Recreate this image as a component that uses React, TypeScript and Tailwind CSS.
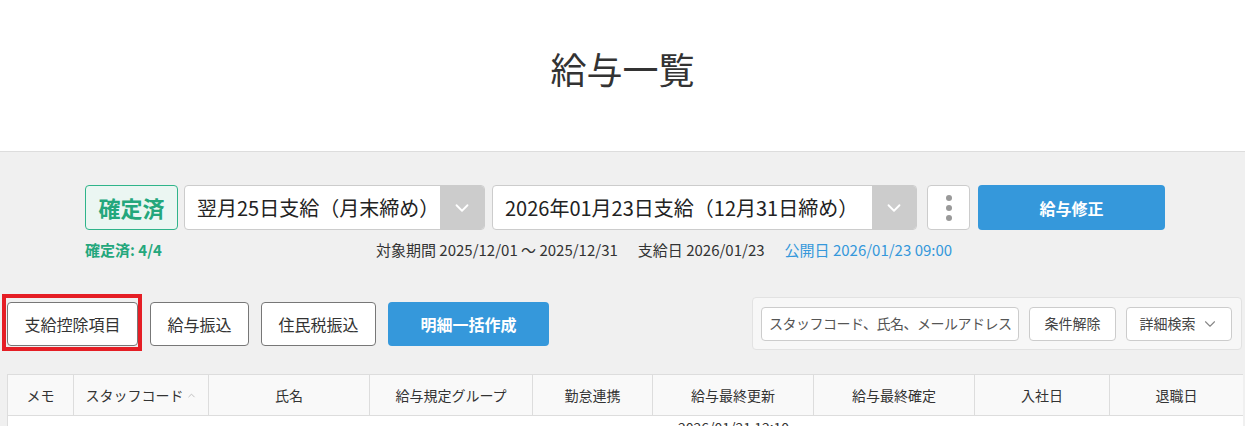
import React from 'react';
import { ChevronDown, ChevronUp } from 'lucide-react';

const font = { fontFamily: '"Noto Sans CJK JP", "Noto Sans", sans-serif' };

const columns = [
  { label: 'メモ', w: 'w-[66px]' },
  { label: 'スタッフコード', w: 'w-[135px]', sort: true },
  { label: '氏名', w: 'w-[161px]' },
  { label: '給与規定グループ', w: 'w-[163px]' },
  { label: '勤怠連携', w: 'w-[120px]' },
  { label: '給与最終更新', w: 'w-[161px]' },
  { label: '給与最終確定', w: 'w-[161px]' },
  { label: '入社日', w: 'w-[135px]' },
  { label: '退職日', w: 'flex-1' },
];

function SelectBox({ label, width }: { label: string; width: string }) {
  return (
    <div className={`flex h-[45px] ${width} rounded border border-[#cccccc] bg-white overflow-hidden`}>
      <div className="flex-1 flex items-center pl-3 text-[20px] text-[#222] whitespace-nowrap">{label}</div>
      <div className="w-[44px] shrink-0 bg-[#cccccc] flex items-center justify-center">
        <ChevronDown size={22} strokeWidth={2} className="text-white" />
      </div>
    </div>
  );
}

function OutlineButton({ label, width }: { label: string; width: string }) {
  return (
    <button className={`h-[44px] ${width} rounded border border-[#777] bg-white text-[16px] text-[#333]`}>
      {label}
    </button>
  );
}

export default function App() {
  return (
    <div className="w-[1245px] h-[426px] overflow-hidden bg-[#f0f0f0]" style={font}>
      <div className="h-[152px] bg-white border-b border-[#dddddd] flex items-center justify-center pb-[16px]">
        <h1 className="text-[36px] text-[#333] leading-none">給与一覧</h1>
      </div>

      <div className="pt-[33px] pl-[85px]">
        <div className="flex items-center">
          <div className="h-[45px] w-[93px] rounded border border-[#2fb48a] bg-[#ebf6f2] flex items-center justify-center text-[22px] font-bold text-[#24a77c]">
            確定済
          </div>
          <div className="ml-[6px]"><SelectBox label="翌月25日支給（月末締め）" width="w-[301px]" /></div>
          <div className="ml-[7px]"><SelectBox label="2026年01月23日支給（12月31日締め）" width="w-[425px]" /></div>
          <div className="ml-[10px] h-[45px] w-[43px] rounded border border-[#cccccc] bg-white flex flex-col items-center justify-center gap-[4px]">
            <span className="w-[6px] h-[6px] rounded-full bg-[#999]" />
            <span className="w-[6px] h-[6px] rounded-full bg-[#999]" />
            <span className="w-[6px] h-[6px] rounded-full bg-[#999]" />
          </div>
          <button className="ml-[8px] h-[45px] w-[187px] rounded bg-[#3598db] text-white text-[16px] font-bold">給与修正</button>
        </div>

        <div className="flex items-center mt-[10px] h-[20px] text-[15px] leading-[20px] whitespace-nowrap">
          <div className="w-[291px] font-bold text-[#24a77c]">確定済: 4/4</div>
          <div className="flex gap-[20px] text-[#333]">
            <span>対象期間 2025/12/01 〜 2025/12/31</span>
            <span>支給日 2026/01/23</span>
            <span className="text-[#3598db]">公開日 2026/01/23 09:00</span>
          </div>
        </div>
      </div>

      <div className="mt-[37px] pl-[7px] pr-[3px] flex items-center justify-between">
        <div className="flex items-center gap-[12px]">
          <div className="relative">
            <OutlineButton label="支給控除項目" width="w-[131px]" />
            <div className="absolute -left-[5px] -right-[4px] -top-[8px] -bottom-[5px] border-4 border-[#e51e25] pointer-events-none" />
          </div>
          <OutlineButton label="給与振込" width="w-[99px]" />
          <OutlineButton label="住民税振込" width="w-[115px]" />
          <button className="h-[44px] w-[161px] rounded bg-[#3598db] text-white text-[16px] font-bold">明細一括作成</button>
        </div>

        <div className="h-[53px] w-[490px] rounded border border-[#e2e2e2] bg-[#f7f7f7] flex items-center pl-[8px] gap-[10px]">
          <div className="h-[34px] w-[258px] shrink-0 rounded border border-[#cccccc] bg-white flex items-center pl-[7px] text-[14px] tracking-[-0.5px] text-[#555] whitespace-nowrap overflow-hidden">
            スタッフコード、氏名、メールアドレス
          </div>
          <button className="h-[34px] w-[87px] shrink-0 rounded border border-[#cccccc] bg-white text-[14px] text-[#444]">条件解除</button>
          <button className="h-[34px] w-[106px] shrink-0 rounded border border-[#cccccc] bg-white text-[14px] text-[#444] flex items-center justify-center gap-[5px]">
            詳細検索
            <ChevronDown size={18} strokeWidth={1.5} className="text-[#888]" />
          </button>
        </div>
      </div>

      <div className="mt-[24px] ml-[7px] mr-[2px] border-l border-[#dddddd] bg-white">
        <div className="flex h-[42px] bg-[#f9f9f9] border-y border-[#dddddd]">
          {columns.map((c, i) => (
            <div
              key={c.label}
              className={`${c.w} shrink-0 flex items-center justify-center text-[14px] text-[#333] ${i < columns.length - 1 ? 'border-r border-[#dddddd]' : ''}`}
            >
              {c.label}
              {c.sort && <ChevronUp size={11} strokeWidth={2} className="ml-[2px] text-[#bbb]" />}
            </div>
          ))}
        </div>
        <div className="flex h-[20px]">
          <div className="w-[645px] shrink-0" />
          <div className="w-[161px] shrink-0 text-center text-[14px] text-[#333] leading-[20px] pt-[1px]">2026/01/21 12:10</div>
        </div>
      </div>
    </div>
  );
}
